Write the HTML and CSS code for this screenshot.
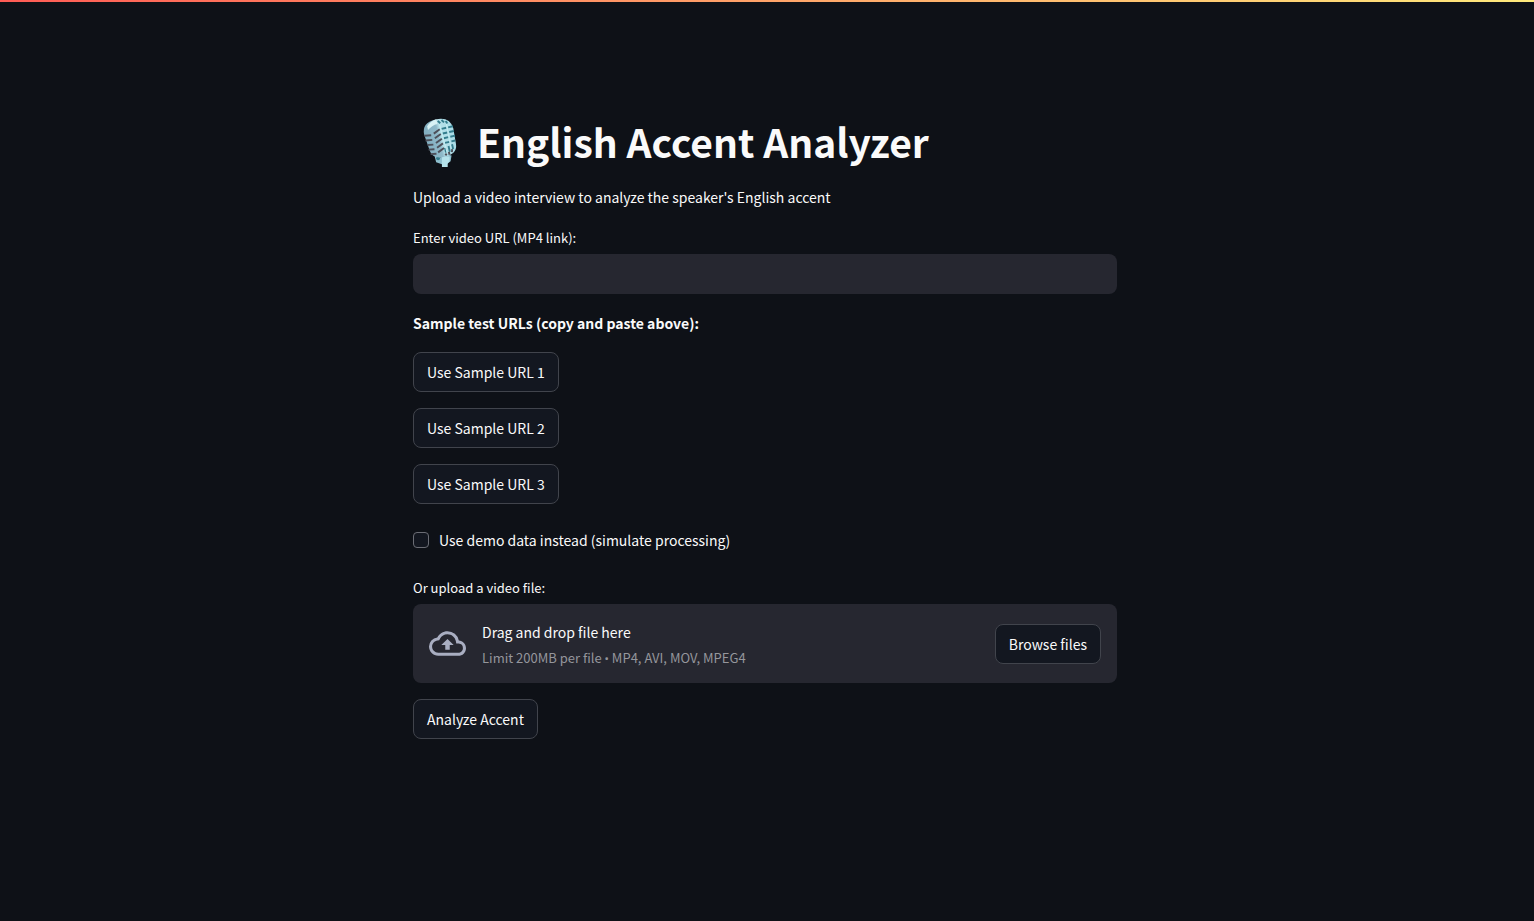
FILE: index.html
```html
<!DOCTYPE html>
<html lang="en">
<head>
<meta charset="utf-8">
<meta name="viewport" content="width=device-width, initial-scale=1">
<title>English Accent Analyzer</title>
<link rel="stylesheet" href="styles.css">
</head>
<body>
<div class="decoration"></div>
<main class="container">
  <h1 class="title">
    <svg class="mic" viewBox="0 0 54 54" aria-hidden="true">
      <defs>
        <linearGradient id="head" x1="0" y1="0" x2="1" y2="0">
          <stop offset="0" stop-color="#82aec0"/>
          <stop offset="0.45" stop-color="#8fb9c9"/>
          <stop offset="0.55" stop-color="#b5dfe8"/>
          <stop offset="1" stop-color="#a9dce7"/>
        </linearGradient>
      </defs>
      <path d="M21 40l6 3 7-3 5 1-1 6-4 3h-5l-6-2z" fill="#8ebfce"/>
      <path d="M29 42h8v5l-2 2v4h-6z" fill="#b5e2eb"/>
      <circle cx="25" cy="44" r="2" fill="#347b8b"/>
      <g transform="rotate(-13 27 24)">
        <path d="M12 16Q12 3 27 3T43 16L42 33Q41 43 28 43T14 34Z" fill="url(#head)"/>
        <path d="M17 8q5-5 11-5v5q-6 0-11 4z" fill="#d9f2f5"/>
        <path d="M12 17l7 1M12 22l7 1M13 27l6 1M13 32l6 1M14 37l6 1M22 17l7-3M22 22l7-3M22 27l7-3M22 32l7-3M22 37l7-3" stroke="#4d4f59" stroke-width="2"/>
        <path d="M29 5l2 3M33 5l2 3M37 7l1 3M31 14h5M31 19h5M31 24h5M31 29h5M38 14h5M38 19h5M38 24h5M38 29h4M30 34v5M34 33v6M38 32v5" stroke="#347d8d" stroke-width="2"/>
        <path d="M30 9l1 30M37 10l-1 26" stroke="#c4edf2" stroke-width="1"/>
        <path d="M29 40l1 2M33 39v3M37 37l-1 3" stroke="#4d4f59" stroke-width="2"/>
      </g>
    </svg>
    <span>English Accent Analyzer</span>
  </h1>
  <p class="text">Upload a video interview to analyze the speaker's English accent</p>
  <div class="field">
    <label class="label" for="url">Enter video URL (MP4 link):</label>
    <input class="input" id="url" type="text">
  </div>
  <p class="text strong">Sample test URLs (copy and paste above):</p>
  <div class="samples">
    <button class="button" type="button">Use Sample URL 1</button>
    <button class="button" type="button">Use Sample URL 2</button>
    <button class="button" type="button">Use Sample URL 3</button>
  </div>
  <label class="check"><input class="box" type="checkbox"><span>Use demo data instead (simulate processing)</span></label>
  <div class="field">
    <span class="label">Or upload a video file:</span>
    <section class="dropzone">
      <svg class="cloud" viewBox="0 0 24 24" aria-hidden="true"><path fill="currentColor" d="M19.35 10.04A7.49 7.49 0 0 0 12 4C9.11 4 6.6 5.64 5.35 8.04A5.994 5.994 0 0 0 0 14c0 3.31 2.69 6 6 6h13c2.76 0 5-2.24 5-5 0-2.64-2.05-4.78-4.65-4.96zM19 18H6c-2.21 0-4-1.79-4-4 0-2.05 1.53-3.76 3.56-3.97l1.07-.11.5-.95A5.469 5.469 0 0 1 12 6c2.62 0 4.88 1.86 5.39 4.43l.3 1.5 1.53.11A2.98 2.98 0 0 1 22 15c0 1.65-1.35 3-3 3zM8 13h2.55v3h2.9v-3H16l-4-4z"/></svg>
      <div class="instructions">
        <span>Drag and drop file here</span>
        <span class="hint">Limit 200MB per file <span class="bullet">•</span> MP4, AVI, MOV, MPEG4</span>
      </div>
      <button class="button" type="button">Browse files</button>
    </section>
  </div>
  <button class="button" type="button">Analyze Accent</button>
</main>
</body>
</html>
```
FILE: styles.css
```css
* { box-sizing: border-box; }

body {
  margin: 0;
  min-height: 100vh;
  padding-right: 4px;
  background: #0e1117;
  color: #fafafa;
  font-family: "Noto Sans CJK SC", "Noto Sans", sans-serif;
  font-size: 14px;
  line-height: 26px;
}

.decoration {
  position: absolute;
  top: 0;
  left: 0;
  right: 0;
  height: 2px;
  background: linear-gradient(90deg, #ff5c55, #ffea7c);
}

.container {
  display: flex;
  flex-direction: column;
  align-items: flex-start;
  gap: 16px;
  max-width: 736px;
  margin: 0 auto;
  padding: 115px 16px 96px;
}

.title {
  display: flex;
  align-items: center;
  gap: 10px;
  margin: 0;
  font-size: 39px;
  font-weight: 700;
  line-height: 53px;
}

.mic { width: 54px; height: 52px; }

.text { margin: 0; }
.strong { font-weight: 700; }

.field {
  display: flex;
  flex-direction: column;
  gap: 4px;
  width: 100%;
}

.label {
  font-size: 13px;
  line-height: 24px;
}

.input {
  width: 100%;
  height: 40px;
  padding: 8px 12px;
  border: 0;
  border-radius: 8px;
  background: #262730;
  color: inherit;
  font: inherit;
}

.samples {
  display: flex;
  flex-direction: column;
  align-items: flex-start;
  gap: 16px;
}

.button {
  height: 40px;
  padding: 0 13px;
  border: 1px solid #41444c;
  border-radius: 8px;
  background: #131720;
  color: inherit;
  font: inherit;
  line-height: 24px;
  white-space: nowrap;
}

.check {
  display: flex;
  align-items: center;
  gap: 10px;
  padding: 7px 0;
}

.box {
  appearance: none;
  width: 16px;
  height: 16px;
  margin: 0;
  border: 1px solid #6b6d75;
  border-radius: 4px;
  background: #131720;
}

.dropzone {
  display: flex;
  align-items: center;
  padding: 16px;
  border-radius: 8px;
  background: #262730;
}

.cloud {
  flex: none;
  width: 37px;
  height: 37px;
  margin-right: 16px;
  color: #a9aec1;
}

.instructions {
  display: flex;
  flex: 1;
  flex-direction: column;
  gap: 4px;
  line-height: 24px;
}

.hint {
  color: #95969c;
  font-size: 13px;
  line-height: 19px;
}

.bullet {
  font-family: Roboto, sans-serif;
  line-height: 1;
}
```
